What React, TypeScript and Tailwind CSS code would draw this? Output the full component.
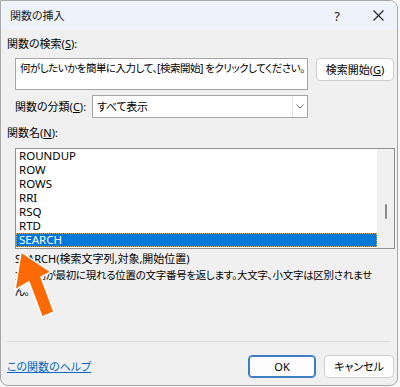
import React from "react";

const items = ["ROUNDUP", "ROW", "ROWS", "RRI", "RSQ", "RTD", "SEARCH"];

export default function App() {
  return (
    <div className="relative w-[400px] h-[387px] bg-[#f7f7f7] overflow-hidden font-['Noto_Sans','Noto_Sans_CJK_JP',sans-serif] [font-feature-settings:'palt'] text-[11px] text-black">
      <div className="w-[398px] h-[386px] bg-[#f0f0f0] border border-[#a8a8a8] rounded-tr-[8px] rounded-b-[8px] overflow-hidden flex flex-col">
        {/* title bar */}
        <div className="h-[29px] bg-[#eef3f9] flex items-center shrink-0">
          <div className="pl-[9px] text-[#1b1b1b] leading-[16px]">関数の挿入</div>
          <div className="ml-auto flex items-center">
            <span className="text-[13px] leading-[16px] text-[#222] mr-[33px]">?</span>
            <svg width="11" height="11" viewBox="0 0 11 11" className="mr-[13px]">
              <path d="M0.5 0.5 L10.5 10.5 M10.5 0.5 L0.5 10.5" stroke="#222" strokeWidth="1.1" />
            </svg>
          </div>
        </div>

        {/* body */}
        <div className="flex flex-col flex-1">
          <div className="pl-[6px] mt-[6px] leading-[16px]">
            関数の検索(<span className="underline">S</span>):
          </div>
          <div className="flex items-start mt-[6px] pl-[14px]">
            <div className="w-[293px] h-[32px] bg-white border border-[#a5a5a5] pl-[4px] pt-[1px] leading-[16px] whitespace-nowrap overflow-hidden text-[10.5px] tracking-[-0.5px]">
              何がしたいかを簡単に入力して、[検索開始] をクリックしてください。
            </div>
            <div className="ml-[8px] w-[78px] h-[23px] bg-[#fdfdfd] border border-[#cfcfcf] rounded-[4px] flex items-center justify-center leading-[16px]">
              検索開始(<span className="underline">G</span>)
            </div>
          </div>
          <div className="flex items-center mt-[5px] pl-[14px]">
            <div className="w-[77px] leading-[16px]">
              関数の分類(<span className="underline">C</span>):
            </div>
            <div className="w-[216px] h-[23px] bg-white border border-[#a5a5a5] flex items-center">
              <div className="flex-1 pl-[4px] leading-[16px] tracking-[-0.3px]">すべて表示</div>
              <div className="w-[15px] h-full border-l border-[#e3e3e3] flex items-center justify-center">
                <svg width="8" height="5" viewBox="0 0 8 5">
                  <path d="M0.5 0.5 L4 4 L7.5 0.5" fill="none" stroke="#6a6a6a" strokeWidth="1" />
                </svg>
              </div>
            </div>
          </div>
          <div className="pl-[6px] mt-[7px] leading-[16px]">
            関数名(<span className="underline">N</span>):
          </div>
          <div className="ml-[14px] mt-[7px] w-[380px] h-[101px] bg-white border border-[#8f8f8f] flex">
            <div className="flex-1 flex flex-col text-[11.5px]">
              {items.map((it) => (
                <div
                  key={it}
                  className={
                    it === "SEARCH"
                      ? "h-[14px] leading-[12px] pl-[2px] bg-[#0078d7] text-white border border-dotted border-[#c9a96a]"
                      : "h-[14px] leading-[14px] pl-[3px]"
                  }
                >
                  {it}
                </div>
              ))}
            </div>
            <div className="w-[17px] bg-[#f0f0f0] flex justify-center">
              <div className="mt-[55px] w-[2px] h-[15px] bg-[#8a8a8a] rounded-full" />
            </div>
          </div>
          <div className="pl-[14px] mt-[2px] leading-[16px] whitespace-nowrap text-[10.5px] tracking-[-0.3px]">
            <div className="text-[11px] tracking-normal">SEARCH(検索文字列,対象,開始位置)</div>
            <div>文字列が最初に現れる位置の文字番号を返します。大文字、小文字は区別されませ</div>
            <div>ん。</div>
          </div>
          <div className="flex-1" />
          <div className="mx-[6px] h-px bg-[#dadada]" />
          <div className="flex items-center mt-[13px] mb-[7px] pl-[6px] pr-[3px]">
            <span className="text-[#0067c0] underline leading-[16px]">この関数のヘルプ</span>
            <div className="ml-auto w-[68px] h-[23px] bg-[#fdfdfd] border border-[#3d7dc6] rounded-[4px] flex items-center justify-center leading-[16px] shadow-[inset_0_0_0_1px_#3d7dc6]">
              OK
            </div>
            <div className="ml-[8px] w-[70px] h-[23px] bg-[#fdfdfd] border border-[#cfcfcf] rounded-[4px] flex items-center justify-center leading-[16px]">
              キャンセル
            </div>
          </div>
        </div>
      </div>

      {/* orange arrow overlay */}
      <svg className="absolute left-0 top-0 pointer-events-none" width="400" height="387" viewBox="0 0 400 387">
        <polygon
          points="21,252 51,272 41,277 54,312 42,317 29,282 15,290"
          fill="#fb6a05"
          stroke="#ffffff"
          strokeWidth="1.5"
          strokeLinejoin="round"
        />
      </svg>
    </div>
  );
}
